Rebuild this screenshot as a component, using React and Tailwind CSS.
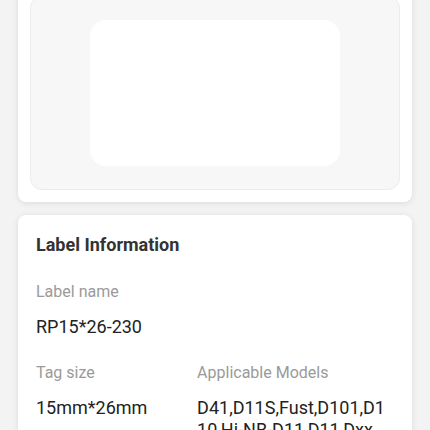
import React from 'react';

const font = { fontFamily: 'Roboto, "Noto Sans", sans-serif' };

export default function App() {
  return (
    <div className="w-[430px] h-[430px] overflow-hidden bg-[#f3f3f3] px-[18px]" style={font}>
      {/* Preview card */}
      <div className="-mt-[16px] bg-white rounded-[8px] p-[12px] shadow-[0_1px_6px_rgba(0,0,0,0.1)]">
        <div className="h-[194px] rounded-[12px] bg-[#f7f7f7] border border-[#ececec] flex items-start justify-center pt-[23px]">
          <div className="w-[250px] h-[146px] bg-white rounded-[16px]" />
        </div>
      </div>

      {/* Label info card */}
      <div className="mt-[13px] bg-white rounded-[8px] px-[18px] pt-[18px] pb-[20px] shadow-[0_1px_6px_rgba(0,0,0,0.1)]">
        <div className="text-[18px] leading-[24px] font-bold text-[#333]">Label Information</div>

        <div className="mt-[25px] text-[16px] leading-[20px] text-[#9a9a9a]">Label name</div>
        <div className="mt-[13px] text-[18px] leading-[24px] text-[#222]">RP15*26-230</div>

        <div className="mt-[24px] flex">
          <div className="w-[45%]">
            <div className="text-[16px] leading-[20px] text-[#9a9a9a]">Tag size</div>
            <div className="mt-[14px] text-[18px] leading-[22px] text-[#222]">15mm*26mm</div>
          </div>
          <div className="w-[55%]">
            <div className="text-[16px] leading-[20px] text-[#9a9a9a]">Applicable Models</div>
            <div className="mt-[14px] text-[18px] leading-[22px] text-[#222] break-all">
              D41,D11S,Fust,D101,D110,Hi-NB-D11,D11,Dxx
            </div>
          </div>
        </div>
      </div>
    </div>
  );
}
